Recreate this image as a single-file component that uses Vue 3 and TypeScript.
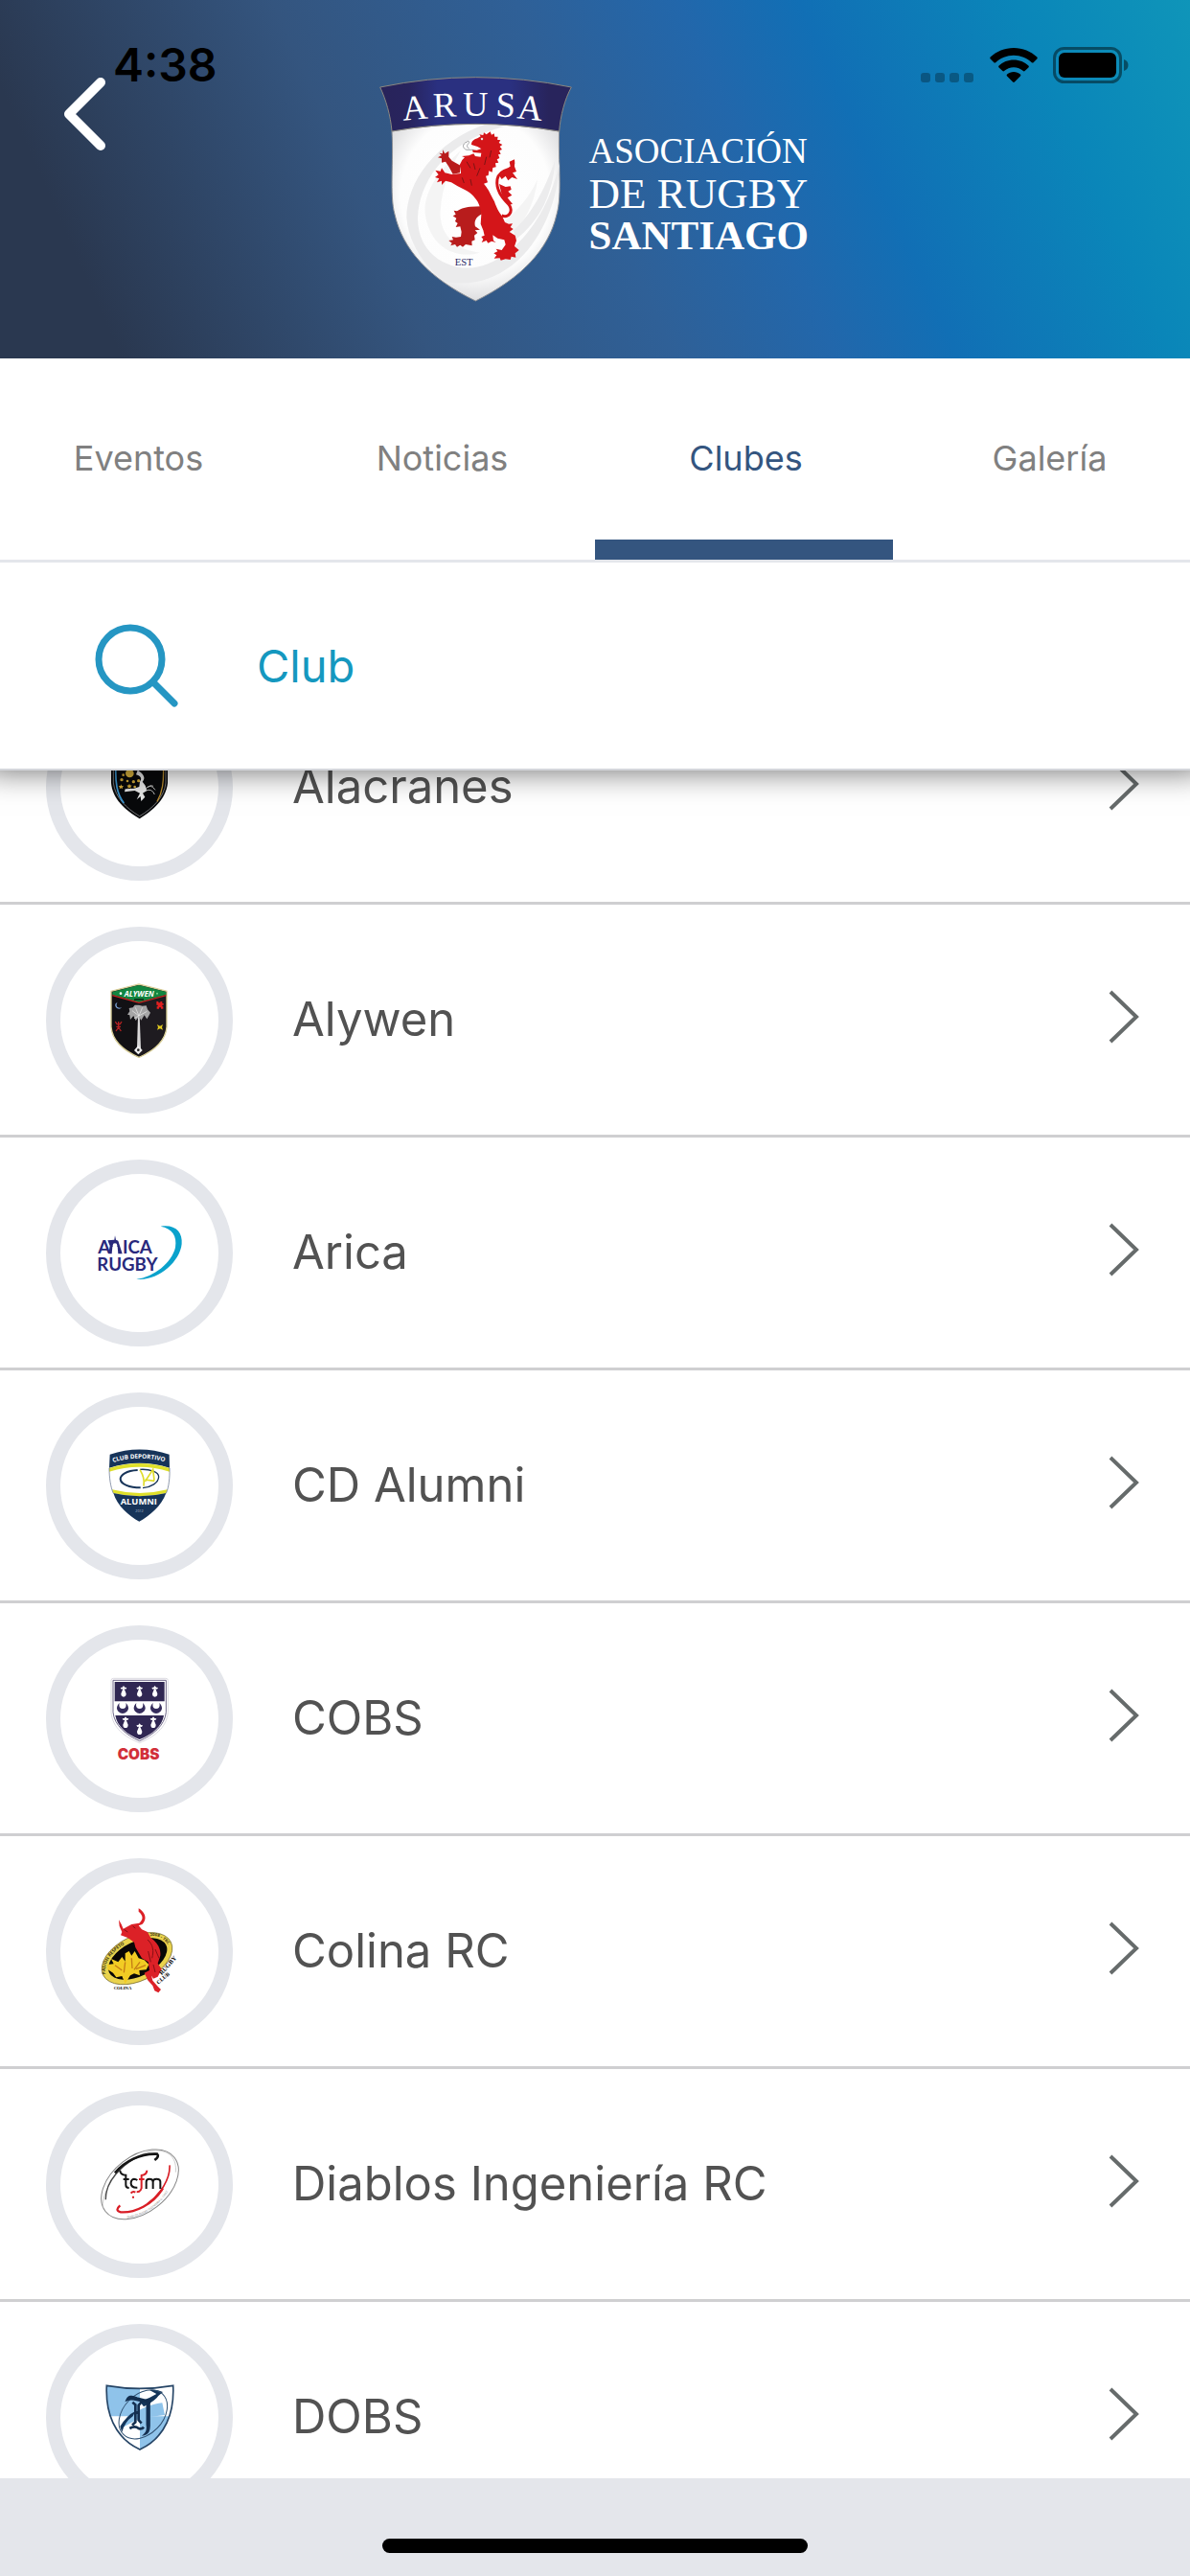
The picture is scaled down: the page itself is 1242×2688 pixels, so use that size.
<script setup lang="ts">
import { onMounted, ref } from 'vue'

interface Club {
  id: string
  name: string
  viewBox: string
}

const tabs: string[] = ['Eventos', 'Noticias', 'Clubes', 'Galería']
const activeTab = ref<string>('Clubes')
const query = ref<string>('')

const clubs: Club[] = [
  { id: 'alacranes', name: 'Alacranes', viewBox: '69 -154 495 495' },
  { id: 'alywen', name: 'Alywen', viewBox: '69 576 495 495' },
  { id: 'arica', name: 'Arica', viewBox: '69 75 495 495' },
  { id: 'alumni', name: 'CD Alumni', viewBox: '69 84 495 495' },
  { id: 'cobs', name: 'COBS', viewBox: '69 63 495 495' },
  { id: 'colina', name: 'Colina RC', viewBox: '69 72 495 495' },
  { id: 'diablos', name: 'Diablos Ingeniería RC', viewBox: '69 81 495 495' },
  { id: 'dobs', name: 'DOBS', viewBox: '69 90 495 495' },
]

const list = ref<HTMLElement | null>(null)
onMounted(() => {
  if (list.value) list.value.scrollTop = 103
})
</script>

<template>
  <div class="app">
    <header class="header">
      <div class="status">
        <span class="time">4:38</span>
        <div class="indicators">
          <svg width="56" height="38" viewBox="0 0 56 38" aria-hidden="true">
            <g fill="#000" opacity=".28">
              <rect x="0" y="27" width="10" height="10" rx="3" />
              <rect x="15" y="27" width="10" height="10" rx="3" />
              <rect x="30" y="27" width="10" height="10" rx="3" />
              <rect x="45" y="27" width="10" height="10" rx="3" />
            </g>
          </svg>
          <svg width="50" height="38" viewBox="0 0 50 38" aria-hidden="true">
            <path d="M25 1C15.500 1 7 4.600.700 10.600c-.6.600-.6 1.300 0 1.900l3.700 3.700c.5.500 1.300.5 1.800 0C11.200 11.500 17.800 8.700 25 8.700s13.800 2.800 18.800 7.500c.5.500 1.300.5 1.800 0l3.700-3.700c.6-.6.600-1.300 0-1.900C43 4.600 34.500 1 25 1Z" />
            <path d="M25 13.500c-6 0-11.400 2.300-15.400 6-.6.600-.6 1.300 0 1.900l3.800 3.700c.5.500 1.200.5 1.700 0 2.700-2.400 6.100-3.800 9.900-3.800s7.200 1.400 9.900 3.800c.5.500 1.200.5 1.700 0l3.800-3.700c.6-.6.600-1.300 0-1.900-4-3.700-9.400-6-15.400-6Z" />
            <path d="M25 26c-2.700 0-5 .9-6.900 2.500-.6.500-.6 1.300 0 1.900l6 6.100c.5.500 1.300.5 1.800 0l6-6.100c.6-.6.600-1.400 0-1.900C30 26.900 27.700 26 25 26Z" />
          </svg>
          <svg width="79" height="38" viewBox="0 0 79 38" aria-hidden="true">
            <rect x="1.500" y="1.500" width="69" height="35" rx="10" fill="none" stroke="#000" stroke-opacity=".45" stroke-width="3" />
            <rect x="6" y="6" width="60" height="26" rx="6" />
            <path d="M74 13c3 1 4.500 3 4.500 6s-1.500 5-4.500 6Z" opacity=".45" />
          </svg>
        </div>
      </div>

      <button class="back" type="button" aria-label="Volver">
        <svg width="46" height="78" viewBox="0 0 46 78" aria-hidden="true">
          <path d="M39 6 6 39l33 33" fill="none" stroke="#fff" stroke-width="10" stroke-linecap="round" stroke-linejoin="round" />
        </svg>
      </button>

      <div class="brand">
        <svg class="crest" viewBox="45 59 603 705" role="img" aria-label="Escudo ARUSA">
          <defs>
            <linearGradient id="band" x1="0" x2="1" y1="0" y2="0">
              <stop offset="0" stop-color="#28235a" />
              <stop offset=".15" stop-color="#28245e" />
              <stop offset=".3" stop-color="#2a3080" />
              <stop offset=".68" stop-color="#2a3080" />
              <stop offset=".88" stop-color="#28245c" />
              <stop offset="1" stop-color="#28245c" />
            </linearGradient>
            <radialGradient id="field" cx=".5" cy=".4" r=".62">
              <stop offset="0" stop-color="#fff" />
              <stop offset=".72" stop-color="#fdfdfd" />
              <stop offset="1" stop-color="#dadadc" />
            </radialGradient>
            <clipPath id="fieldClip">
              <path d="M84 230Q346 184 608 230C604 320 618 430 600 490C575 600 490 690 346 761C200 690 118 600 93 490C76 430 90 320 84 230Z" />
            </clipPath>
          </defs>
          <path d="M84 230Q346 184 608 230C604 320 618 430 600 490C575 600 490 690 346 761C200 690 118 600 93 490C76 430 90 320 84 230Z" fill="url(#field)" stroke="#8d9096" stroke-width="3" />
          <g clip-path="url(#fieldClip)">
            <path d="M385 205C220 260 130 390 130 500C135 580 190 660 250 700C440 740 600 560 610 320C570 530 420 680 290 655C220 640 165 590 165 500C170 380 260 260 435 215Z" fill="#ebebec" />
            <path d="M300 290C200 380 180 450 190 500C210 600 290 630 360 610C270 600 232 540 236 480C240 400 270 340 300 290Z" fill="#f4f4f4" />
            <path d="M540 380C510 450 460 490 430 520L445 560C500 520 530 460 540 380Z" fill="#f4f4f4" />
            <path d="M595 320C560 420 520 490 465 540L470 570C550 510 590 420 595 320Z" fill="#ececed" />
          </g>
          <path d="M47 92Q346 30 646 92C625 130 612 180 608 230Q346 184 84 230C80 180 65 130 47 92Z" fill="url(#band)" stroke="#8b8880" stroke-width="3" />
          <text class="serif" x="119 214 306 408 474" y="196 186 181 183 189" rotate="-5 -2 0 3 6" font-size="110" fill="#fff">ARUSA</text>
          <g fill="#b81c1c">
            <path d="M243 288L250 300 262 292 262 310 272 322 300 338 297 360 275 364 262 340 252 325 240 328 240 315 228 312 240 305 232 298 243 300Z" />
            <path d="M365 465L330 466C310 468 295 474 288 480L278 478 284 490 275 495 286 502 282 512 290 518 284 530 298 528 302 545 300 560 285 562 272 560 276 570 262 572 272 580 268 588 282 584 288 592 298 586 306 592 315 584 335 588 334 574 344 570 342 556 352 548 344 540 360 538 345 528C340 510 350 495 365 490Z" />
          </g>
          <path d="M428 494C450 502 464 482 452 462C438 445 408 420 414 380C418 358 435 352 450 348C462 344 466 334 464 322" fill="none" stroke="#d41519" stroke-width="9" />
          <g fill="#d41519">
            <path d="M440 352L455 340 452 325 468 318 468 340 474 356 462 360 477 380 460 374 448 384 440 370 428 380 420 368Z" />
            <path d="M420 395L440 404 455 402 458 412 448 418 460 430 446 438 462 458 450 460 428 428Z" />
            <path d="M392 231L396 241 404 237 406 247 416 247 414 256 424 258 419 266 430 272 422 278 429 287 420 291 425 301 417 303 421 314 413 318 418 328 408 330 410 342 400 344 398 358 388 354 386 368 378 370 384 390 372 394C388 412 396 436 405 450C412 470 418 482 430 497L438 515 450 520 462 519 455 530 464 536 452 545 470 556 474 572 468 590 482 602 470 612 472 625 458 622 455 632 440 630 425 634 422 627 404 628 412 618 403 612 415 606 410 598 428 602 440 585 436 570 415 565 400 555 402 572 410 578 396 574 385 580 380 572 365 578 370 568 364 560 374 556 370 540 362 520 364 490C362 470 355 450 345 440C330 420 310 412 290 402L270 390 252 385 240 398 240 385 225 390 232 378 219 374 230 366 220 352 236 355 240 345 250 360 272 365 300 362 300 345 296 336 304 320 312 312 303 308 325 306 340 300 345 308 362 310 364 298 338 296 336 288 350 289 364 285 352 278 333 272C333 262 340 255 352 252L362 246 358 240 370 242 372 234 380 240Z" />
          </g>
          <path d="M340 288H318C304 284 304 268 318 264C324 258 328 262 324 268C318 274 318 280 326 284" fill="none" stroke="#77797b" stroke-width="2" />
          <path d="M360 256Q366 248 372 255M318 325L330 345M340 330L345 350M360 345L350 370M380 310L374 335M395 290L390 312M330 380L334 400M304 375L310 392" fill="none" stroke="#7d1414" stroke-width="3" />
          <circle cx="366" cy="254" r="4" fill="#f3dcdc" />
          <text class="serif" x="281" y="651" font-size="32" fill="#2b2a66">EST</text>
        </svg>
        <div class="wordmark">
          <span class="w1">ASOCIACIÓN</span>
          <span class="w2">DE RUGBY</span>
          <span class="w3">SANTIAGO</span>
        </div>
      </div>
    </header>

    <nav class="tabs">
      <div class="tab-row">
        <button
          v-for="tab in tabs"
          :key="tab"
          type="button"
          class="tab"
          :class="{ active: tab === activeTab }"
          @click="activeTab = tab"
        >
          {{ tab }}
        </button>
      </div>
      <div class="marker-row">
        <span
          v-for="tab in tabs"
          :key="tab"
          class="marker"
          :class="{ on: tab === activeTab }"
        />
      </div>
    </nav>

    <label class="search">
      <svg width="88" height="88" viewBox="0 0 88 88" role="img" aria-label="Buscar">
        <g fill="none" stroke="#2596c3" stroke-width="7">
          <circle cx="37" cy="37" r="33" />
          <path d="m61 61 22 22" stroke-linecap="round" />
        </g>
      </svg>
      <input v-model="query" type="text" placeholder="Club" />
    </label>

    <main ref="list" class="list">
      <ul>
        <li v-for="club in clubs" :key="club.id">
          <a class="row" href="#">
            <span class="ring">
              <svg :viewBox="club.viewBox" aria-hidden="true">
                <g v-if="club.id === 'alacranes'">
                  <path d="M228 -42Q316 -72 405 -42V80C400 130 360 165 317 192C272 165 232 130 228 80Z" fill="#08090b" />
                  <path d="M235 0V80C240 124 276 160 317 184C358 160 394 124 399 80V0" fill="none" stroke="#a9abae" stroke-width="2" />
                  <path d="M243 20C240 80 246 115 268 143" fill="none" stroke="#3a94cf" stroke-width="5" />
                  <path d="M391 20C394 80 388 110 372 138" fill="none" stroke="#b98c30" stroke-width="4" />
                  <circle cx="286" cy="50" r="13" fill="#dcb63f" />
                  <g fill="#d1a93a">
                    <path d="m259 84 2 5 6 1-4 4 1 5-5-3-5 3 1-5-4-4 6-1Z" />
                    <path d="m285 82 2 5 6 1-4 4 1 5-5-3-5 3 1-5-4-4 6-1Z" />
                    <circle cx="261" cy="70" r="5" /><circle cx="279" cy="74" r="4" />
                    <circle cx="298" cy="76" r="5" /><circle cx="314" cy="73" r="5" />
                    <circle cx="266" cy="55" r="4" /><circle cx="302" cy="92" r="4" />
                  </g>
                  <path d="M311 40C332 52 336 66 326 76L335 88 340 104 327 112 334 124 322 137 320 122 308 132 318 112 302 104 270 108 272 99 300 97 316 92 318 76C326 66 320 58 306 54Z" fill="#e6e6e6" />
                  <path d="M336 98Q352 80 366 102M336 104Q356 96 364 116M342 94Q352 84 360 90" fill="none" stroke="#bbb" stroke-width="3" />
                </g>

                <g v-else-if="club.id === 'alywen'">
                  <path d="M228 733L315 711 402 733V845C398 890 360 920 315 940C270 920 232 890 228 845Z" fill="#121114" stroke="#d9cf98" stroke-width="4" />
                  <path d="M316 770V936C358 918 394 888 398 845V745Z" fill="#1e1b20" />
                  <path d="M232 735L315 714 400 735V744L315 767 232 744Z" fill="#118640" />
                  <path d="M232 746L315 769 400 746" fill="none" stroke="#c82420" stroke-width="4" />
                  <text class="sans" x="269" y="749" font-size="24" font-weight="700" font-style="italic" fill="#fff">ALYWEN</text>
                  <circle cx="258" cy="740" r="4" fill="#fff" /><circle cx="372" cy="740" r="3" fill="#7fd08f" />
                  <path d="M300 756H330V762H300Z" fill="#0b3b1e" />
                  <path d="M248 767C240 778 248 788 261 784C254 794 236 784 242 772Z" fill="#7fa8de" />
                  <path d="M370 765h6v4h6v-4h6v6h4v5h-4v5h3v7h-7v-4h-6v4h-7v-7h3v-5h-4v-6Z" fill="#e02020" />
                  <path d="M241 828l5 8h10l5-8M251 828v18l-8 12M251 846l8 12M244 844h14" fill="none" stroke="#b52222" stroke-width="4" />
                  <path d="m372 837 9 5 9-5-3 9 3 8-9-4-9 4 3-8Z" fill="#dfc81f" />
                  <path d="M312 810L309 912H321L317 810Z" fill="#d9d9d9" />
                  <path d="M315 776L326 779 338 778 342 790 351 800 346 810 340 820 332 808 322 824 315 812 305 825 298 810 288 822 286 808 279 806 286 796 284 786 296 784 302 776Z" fill="#a6a6a6" />
                  <path d="M315 810L294 794M315 810L304 784M315 810L326 784M315 810L340 796M315 810L300 818" stroke="#eee" stroke-width="2" fill="none" />
                  <path d="M313 902L326 918 313 931 300 918Z" fill="#eee" />
                  <circle cx="313" cy="917" r="4" fill="#222" />
                </g>

                <g v-else-if="club.id === 'arica'">
                  <text class="geo" font-size="56" font-weight="700" fill="#29297c">
                    <tspan x="187" y="325">A</tspan><tspan x="264" y="325">ICA</tspan><tspan x="184" y="378">RUGBY</tspan>
                  </text>
                  <path d="M217 283L238 281 240 268 243 281 250 284 263 325H250L248 303Q240 293 232 303L230 325H220L224 300Z" fill="#29297c" />
                  <circle cx="240" cy="299" r="7" fill="#fff" />
                  <path d="M383 239C430 232 452 258 449 294C443 352 372 412 307 404C362 398 418 352 429 305C435 268 419 246 383 239Z" fill="#0aa2cc" />
                </g>

                <g v-else-if="club.id === 'alumni'">
                  <path d="M224 233Q317 202 410 233C414 280 412 325 400 355C385 395 350 424 316 443C282 424 248 395 233 355C221 325 220 280 224 233Z" fill="#fff" />
                  <path d="M224 233Q317 202 410 233L411 275Q317 245 222 275Z" fill="#173459" />
                  <path d="M222 276Q317 246 411 276V287Q317 257 222 287Z" fill="#dfe02b" />
                  <path d="M231 343Q317 365 404 343L400 354Q317 374 235 354Z" fill="#dfe02b" />
                  <path d="M235 354Q317 374 400 354C385 395 350 424 316 443C282 424 248 395 235 354Z" fill="#173459" />
                  <path d="M222 275C222 305 226 335 235 355M411 275C412 305 409 335 400 355" fill="none" stroke="#566783" stroke-width="2" />
                  <path d="M311 282C275 284 257 297 257 310C258 326 285 337 320 337" fill="none" stroke="#173459" stroke-width="6" />
                  <path d="M318 280C350 278 377 288 377 303C376 322 354 335 327 338" fill="none" stroke="#173459" stroke-width="4" />
                  <path d="M318 281Q334 306 330 332M334 318L359 280 363 314M334 312L364 316" fill="none" stroke="#dfdc2b" stroke-width="5" />
                  <path id="alumniArc" d="M230 259Q317 231 410 260" fill="none" />
                  <text class="sans" font-size="19" font-weight="700" fill="#fff"><textPath href="#alumniArc" startOffset="4">CLUB DEPORTIVO</textPath></text>
                  <text class="sans" x="257" y="391" font-size="28" font-weight="700" fill="#fff">ALUMNI</text>
                  <text class="sans" x="304" y="413" font-size="11" fill="#b8c3d2">2012</text>
                </g>

                <g v-else-if="club.id === 'cobs'">
                  <path d="M228 190Q228 184 236 184H398Q406 184 406 190V290C402 340 360 368 317 386C272 368 232 340 228 290Z" fill="#fff" stroke="#dddbe2" stroke-width="3" />
                  <path d="M234 190H400V290C396 332 358 362 317 380C276 362 238 332 234 290Z" fill="#fff" stroke="#6f6889" stroke-width="3" />
                  <path d="M239 195H395V256H239Z" fill="#302753" />
                  <path d="M241 300H393C388 334 356 360 317 375C278 360 246 334 241 300Z" fill="#302753" />
                  <g fill="#fff">
                    <path v-for="p in [[267, 207], [317, 207], [365, 207], [273, 304], [360, 304], [317, 325]]" :key="p.join()" :d="`M${p[0]} ${p[1]}l4 5 6 1-3 5-5-1 6 15q0 10-8 10t-8-10l6-15-5 1-3-5 6-1Z`" />
                  </g>
                  <g fill="#352c5c">
                    <path v-for="x in [264, 317, 369]" :key="x" :d="`M${x - 10} 261q-14 14-4 26q14 14 28 0q10-12-4-26q4 16-10 18q-14-2-10-18Z`" />
                  </g>
                  <text class="heavy" x="248" y="438" font-size="46" font-weight="900" fill="#d2303a">COBS</text>
                </g>

                <g v-else-if="club.id === 'colina'">
                  <ellipse cx="309" cy="341" rx="118" ry="70" transform="rotate(-26 309 341)" fill="#ead34d" stroke="#6c6127" stroke-width="2" />
                  <ellipse cx="311" cy="342" rx="99" ry="54" transform="rotate(-26 311 342)" fill="#080706" />
                  <path id="colinaArc" d="M211 390C202 350 240 308 292 286" fill="none" />
                  <text class="sans" font-size="14" font-weight="700" fill="#3d3718"><textPath href="#colinaArc">PASION RESPETO</textPath></text>
                  <path id="colinaArc2" d="M350 271Q382 264 411 304" fill="none" />
                  <text class="sans" font-size="13" font-weight="700" fill="#3d3718"><textPath href="#colinaArc2">2008 - TRC</textPath></text>
                  <path d="M216 360L236 358 228 342 250 352 262 336 272 350 272 325 284 318 292 332 302 318 314 340 332 346 346 360 338 376 316 378 318 394 300 388 288 394 272 420 262 396 244 400 234 386 218 376Z" fill="#f2cc24" />
                  <path d="M240 362L262 378M272 352L268 385M292 340L294 372M318 352L300 376M336 362L306 374" fill="none" stroke="#c57d16" stroke-width="4" />
                  <path d="M314 184C338 198 340 220 325 234L314 238 324 250 342 258 352 276C374 292 384 310 382 332L374 356 386 374 374 398 360 404 354 394 358 410 374 428 384 438 376 448 364 442 358 426 342 408 332 386 348 378 344 352 324 340 304 306 300 290 280 276 258 268 262 258 254 240 252 220 260 234 266 248 292 234 316 230C330 218 328 206 314 194Z" fill="#dc2127" />
                  <path d="M268 250l12 8M296 240l8 6M342 282C360 298 362 318 356 340M366 312L378 340M344 318L352 352M360 360L366 384" fill="none" stroke="#871015" stroke-width="3" />
                  <text class="serif" x="236" y="437" font-size="14" font-weight="700">COLINA</text>
                  <text class="serif" font-size="20" font-weight="700" transform="translate(386 394) rotate(-48)">RUGBY</text>
                  <text class="serif" font-size="17" font-weight="700" transform="translate(376 422) rotate(-40)">CLUB</text>
                </g>

                <g v-else-if="club.id === 'diablos'">
                  <ellipse cx="318" cy="328" rx="137" ry="88" transform="rotate(-38 318 328)" fill="#fff" stroke="#858585" stroke-width="3" />
                  <path d="M202 402C196 330 290 226 368 222C412 222 434 248 430 290" fill="none" stroke="#b5b5b5" stroke-width="2" />
                  <path d="M211 376C210 308 290 230 368 232" fill="none" stroke="#444" stroke-width="4" />
                  <path d="M240 292C270 256 320 230 372 233Q380 240 364 252" fill="none" stroke="#141414" stroke-width="8" />
                  <path d="M411 268C414 310 382 360 342 388" fill="none" stroke="#d91e26" stroke-width="5" />
                  <path d="M390 340C360 392 300 418 258 415Q238 410 256 394" fill="none" stroke="#d91e26" stroke-width="7" />
                  <path d="M256 284Q256 298 274 299V330Q274 339 284 339M266 312H284M310 315Q305 311 300 311Q290 312 290 325Q291 339 310 338" fill="none" stroke="#151515" stroke-width="6" />
                  <path d="M338 342V320Q338 311 348 311Q359 311 359 320V342M359 320Q359 311 370 311Q382 311 382 320V342" fill="none" stroke="#151515" stroke-width="6" />
                  <path d="M340 284Q340 297 323 300V340Q320 352 308 352M315 312H332M290 356Q296 348 304 353M294 368h6" fill="none" stroke="#d91e26" stroke-width="6" />
                  <path id="diabloArc" d="M278 434C350 426 412 370 430 292" fill="none" />
                  <text class="sans" font-size="9" fill="#777"><textPath href="#diabloArc">DIABLOS RUGBY INGENIERIA U. CHILE</textPath></text>
                </g>

                <g v-else>
                  <clipPath id="dobsClip"><path d="M214 238Q317 256 422 238C426 320 400 400 318 438C236 400 210 320 214 238Z" /></clipPath>
                  <g clip-path="url(#dobsClip)">
                    <path d="M200 220H440V450H200Z" fill="#fff" />
                    <path d="M200 220H318V334H200ZM318 334H440V450H318Z" fill="#8fc3ea" />
                    <path d="M258 372C276 330 330 300 388 292L396 330 318 340Z" fill="#8fc3ea" />
                    <path d="M348 252Q372 250 390 258L376 270Q368 284 330 304L318 288Q348 278 370 264ZM256 366Q278 330 304 318L296 334Q270 352 262 384Z" fill="#15365a" />
                    <ellipse cx="328" cy="328" rx="88" ry="62" transform="rotate(-46 328 328)" fill="none" stroke="#315273" stroke-width="3" />
                  </g>
                  <path d="M214 238Q317 256 422 238C426 320 400 400 318 438C236 400 210 320 214 238Z" fill="none" stroke="#264566" stroke-width="5" />
                  <path d="M276 284Q284 264 308 276L338 284Q354 276 348 296V364Q348 388 332 391Q344 380 340 360V290L300 282Q286 280 276 284Z" fill="#142f50" stroke="#142f50" stroke-width="5" />
                  <path d="M295 290L304 298V352L294 362M324 288L314 300V346L323 356M304 326L316 318M286 372Q302 362 314 372Q324 376 330 368" fill="none" stroke="#142f50" stroke-width="8" />
                </g>
              </svg>
            </span>
            <span class="name">{{ club.name }}</span>
            <svg class="chevron" width="34" height="58" viewBox="0 0 34 58" aria-hidden="true">
              <path d="m3 3 27 26L3 55" fill="none" stroke="#666b6b" stroke-width="4" />
            </svg>
          </a>
        </li>
      </ul>
    </main>

    <footer class="home"><span class="pill" /></footer>
  </div>
</template>

<style>
body {
  margin: 0;
}
</style>

<style scoped>
.app {
  display: flex;
  flex-direction: column;
  height: 100vh;
  overflow: hidden;
  background: #fff;
  font-family: Inter, Roboto, sans-serif;
}

.header {
  position: relative;
  flex: none;
  display: grid;
  grid-template-columns: 1fr auto 1fr;
  align-items: start;
  box-sizing: border-box;
  padding: 80px 0 59px;
  background: linear-gradient(66deg, #2a3850 0%, #2a3850 9%, #34557f 32%, #2f6097 50%, #2267ab 62%, #116fb5 71%, #0a86b9 87%, #0f95b9 100%);
}

.status {
  position: absolute;
  top: 40px;
  left: 0;
  right: 0;
  display: flex;
  justify-content: space-between;
  align-items: center;
  padding: 0 64px 0 118px;
}

.time {
  font-size: 48px;
  line-height: 56px;
  font-weight: 600;
}

.indicators {
  display: flex;
  gap: 16px;
}

.back {
  justify-self: start;
  margin-left: 66px;
  padding: 0;
  border: 0;
  background: none;
}

.back svg,
.indicators svg,
.crest {
  display: block;
}

.brand {
  display: flex;
  gap: 18px;
}

.crest {
  width: 201px;
  height: 235px;
}

.wordmark {
  display: flex;
  flex-direction: column;
  margin-top: 56px;
  width: 232px;
  color: #fff;
  font-family: "Liberation Serif", serif;
  white-space: nowrap;
}

.w1 {
  font-size: 37px;
  line-height: 44px;
}

.w2 {
  font-size: 45px;
  line-height: 44px;
}

.w3 {
  font-size: 43px;
  line-height: 44px;
  font-weight: 700;
}

.serif {
  font-family: "Liberation Serif", serif;
}

.sans {
  font-family: "Open Sans", sans-serif;
}

.geo {
  font-family: Lato, sans-serif;
}

.heavy {
  font-family: Inter, sans-serif;
}

.tabs {
  position: relative;
  z-index: 2;
  flex: none;
  overflow: hidden;
  background: #fff;
  border-bottom: 3px solid #e4e6eb;
}

.tab-row {
  display: grid;
  grid-template-columns: repeat(4, 1fr);
  margin: 0 -12px 0 -14px;
}

.tab {
  height: 189px;
  padding: 18px 0 0;
  border: 0;
  background: none;
  color: #808080;
  font: 400 36px/44px Inter, sans-serif;
}

.tab.active {
  color: #34557f;
}

.marker-row {
  display: grid;
  grid-template-columns: repeat(4, 1fr);
}

.marker {
  height: 21px;
}

.marker.on {
  background: #34557f;
}

.search {
  position: relative;
  z-index: 1;
  flex: none;
  display: flex;
  align-items: center;
  gap: 81px;
  height: 215px;
  padding: 0 99px;
  background: #fff;
  border-bottom: 2px solid #d4d6db;
  box-shadow: 0 -16px 32px 16px rgba(0, 0, 0, 0.6);
}

.search svg {
  flex: none;
}

.search input {
  flex: 1;
  min-width: 0;
  padding: 0;
  border: 0;
  outline: 0;
  background: none;
  color: #1598bf;
  font: 400 47px/60px Inter, sans-serif;
}

.search input::placeholder {
  color: #1598bf;
  opacity: 1;
}

.list {
  flex: 1;
  min-height: 0;
  overflow-y: auto;
  scrollbar-width: none;
}

.list ul {
  margin: 0;
  padding: 0;
  list-style: none;
}

.row {
  display: flex;
  align-items: center;
  height: 240px;
  padding: 0 52px 0 48px;
  border-bottom: 3px solid #cfcfd1;
  color: #525252;
  text-decoration: none;
}

.ring {
  flex: none;
  width: 165px;
  height: 165px;
  border: 15px solid #e4e6eb;
  border-radius: 50%;
}

.ring svg {
  display: block;
  width: 100%;
  height: 100%;
}

.name {
  flex: 1;
  padding-left: 62px;
  font-size: 49px;
  line-height: 60px;
}

.chevron {
  flex: none;
  margin-bottom: 6px;
}

.home {
  flex: none;
  display: flex;
  justify-content: center;
  align-items: flex-end;
  box-sizing: border-box;
  height: 102px;
  padding-bottom: 24px;
  background: #e4e6eb;
}

.pill {
  width: 444px;
  height: 15px;
  border-radius: 8px;
  background: #000;
}
</style>
